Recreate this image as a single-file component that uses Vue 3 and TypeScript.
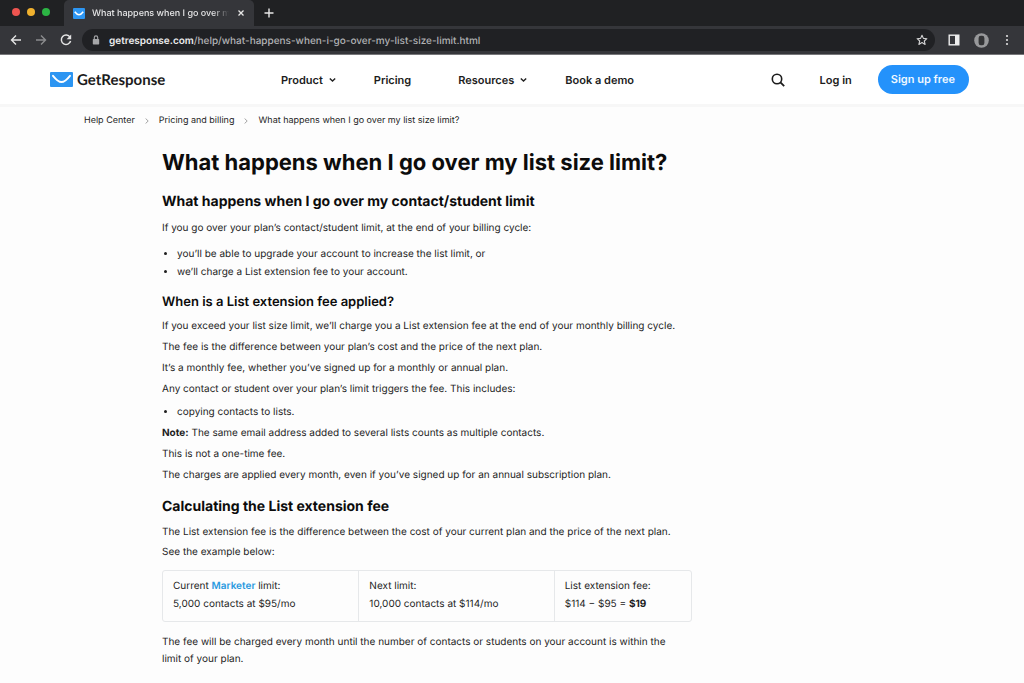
<script setup lang="ts">
import { ref } from 'vue'

interface NavItem {
  label: string
  menu: boolean
}

const address = ref('getresponse.com/help/what-happens-when-i-go-over-my-list-size-limit.html')
const navItems: NavItem[] = [
  { label: 'Product', menu: true },
  { label: 'Pricing', menu: false },
  { label: 'Resources', menu: true },
  { label: 'Book a demo', menu: false },
]
const crumbs: string[] = ['Help Center', 'Pricing and billing']
const feeRules: string[] = [
  'If you exceed your list size limit, we’ll charge you a List extension fee at the end of your monthly billing cycle.',
  'The fee is the difference between your plan’s cost and the price of the next plan.',
  'It’s a monthly fee, whether you’ve signed up for a monthly or annual plan.',
  'Any contact or student over your plan’s limit triggers the fee. This includes:',
]
</script>

<template>
  <div class="browser">
    <header class="chrome">
      <div class="tabstrip">
        <div class="lights"><i class="red"></i><i class="amber"></i><i class="green"></i></div>
        <div class="tab">
          <svg class="favicon" viewBox="0 0 12 11" aria-hidden="true">
            <rect width="12" height="11" rx="1" fill="#2d96f3" />
            <path d="M1.8 3.8Q6 9.6 10.2 3.8" fill="none" stroke="#fff" stroke-width="1.6" />
          </svg>
          <span class="tab-title">What happens when I go over my list size limit?</span>
          <button class="icon-btn tab-close" aria-label="Close tab">
            <svg width="8" height="8" viewBox="0 0 8 8"><path d="M1.5 1.5l5 5M6.5 1.5l-5 5" stroke="#e8e8e8" stroke-width="1.3" /></svg>
          </button>
        </div>
        <button class="icon-btn new-tab" aria-label="New tab">
          <svg width="10" height="10" viewBox="0 0 10 10"><path d="M5 .5v9M.5 5h9" stroke="#e8e8e8" stroke-width="1.4" /></svg>
        </button>
      </div>
      <div class="toolbar">
        <button class="icon-btn" aria-label="Back">
          <svg width="12" height="12" viewBox="0 0 12 12"><path d="M11 6H1.8M6 1.5L1.5 6L6 10.5" fill="none" stroke="#e4e4e4" stroke-width="1.4" /></svg>
        </button>
        <button class="icon-btn" aria-label="Forward">
          <svg width="12" height="12" viewBox="0 0 12 12"><path d="M1 6h9.2M6 1.5L10.5 6L6 10.5" fill="none" stroke="#8b8c8e" stroke-width="1.4" /></svg>
        </button>
        <button class="icon-btn" aria-label="Reload">
          <svg width="12" height="12" viewBox="0 0 12 12"><path d="M10 3.2A4.7 4.7 0 1 0 10.6 7" fill="none" stroke="#e4e4e4" stroke-width="1.5" /><path d="M11.2.6v4.6H6.6z" fill="#e4e4e4" /></svg>
        </button>
        <div class="address">
          <svg width="8" height="10" viewBox="0 0 8 10" aria-hidden="true"><rect x=".8" y="4" width="6.4" height="5.4" rx=".7" fill="#a5a6a8" /><path d="M2.3 4.2V2.6a1.7 1.7 0 0 1 3.4 0v1.6" fill="none" stroke="#a5a6a8" stroke-width="1.1" /></svg>
          <label class="url">
            <span class="url-text" aria-hidden="true"><b>getresponse.com</b>{{ address.slice(15) }}</span>
            <input v-model="address" class="url-input" type="text" aria-label="Address" />
          </label>
          <button class="icon-btn" aria-label="Bookmark">
            <svg width="12" height="12" viewBox="0 0 12 12"><path d="M6 1.2l1.4 3.2 3.5.3-2.6 2.3.8 3.4L6 8.6l-3.1 1.8.8-3.4L1.1 4.7l3.5-.3z" fill="none" stroke="#d2d2d3" stroke-width="1.1" stroke-linejoin="round" /></svg>
          </button>
        </div>
        <div class="tools">
          <button class="icon-btn" aria-label="Side panel">
            <svg width="12" height="12" viewBox="0 0 12 12"><rect x="1.2" y="1.2" width="9.6" height="9.6" fill="none" stroke="#eee" stroke-width="1.4" /><path d="M7 1h4v10H7z" fill="#eee" /></svg>
          </button>
          <button class="icon-btn" aria-label="Profile">
            <svg width="15" height="15" viewBox="0 0 15 15"><circle cx="7.5" cy="7.5" r="7.3" fill="#98999b" /><rect x="4.6" y="2.8" width="5.8" height="9.4" rx="2.2" fill="#333436" /></svg>
          </button>
          <button class="icon-btn" aria-label="More">
            <svg width="8" height="12" viewBox="0 0 8 12" fill="#dedede"><circle cx="4" cy="2" r="1.1" /><circle cx="4" cy="6" r="1.1" /><circle cx="4" cy="10" r="1.1" /></svg>
          </button>
        </div>
      </div>
    </header>

    <header class="site">
      <a class="logo" href="#">
        <svg width="23" height="15" viewBox="0 0 23 15" aria-hidden="true">
          <rect width="23" height="15" rx="1" fill="#2c95f2" />
          <path d="M3 3.8C6.2 7.8 8.8 10 11.5 10S16.8 7.8 20 3.8" fill="none" stroke="#fff" stroke-width="1.9" stroke-linecap="round" />
        </svg>
        <span>GetResponse</span>
      </a>
      <nav>
        <a v-for="item in navItems" :key="item.label" href="#" :class="{ plain: !item.menu }">
          {{ item.label }}
          <svg v-if="item.menu" width="7" height="6" viewBox="0 0 7 6" aria-hidden="true"><path d="M.8 1.4l2.7 2.6 2.7-2.6" fill="none" stroke="#222" stroke-width="1.4" /></svg>
        </a>
      </nav>
      <div class="account">
        <button class="icon-btn" aria-label="Search">
          <svg width="14" height="14" viewBox="0 0 14 14"><circle cx="6" cy="6" r="4.7" fill="none" stroke="#1c1c1c" stroke-width="1.6" /><path d="M9.4 9.4l3.8 3.8" stroke="#1c1c1c" stroke-width="1.8" /></svg>
        </button>
        <a href="#">Log in</a>
        <a class="signup" href="#">Sign up free</a>
      </div>
    </header>

    <div class="crumbs">
      <template v-for="crumb in crumbs" :key="crumb">
        <a href="#">{{ crumb }}</a>
        <svg width="4" height="6" viewBox="0 0 4 6" aria-hidden="true"><path d="M.6.5L3.2 3 .6 5.5" fill="none" stroke="#999" stroke-width=".9" /></svg>
      </template>
      <span>What happens when I go over my list size limit?</span>
    </div>

    <main>
      <h1>What happens when I go over my list size limit?</h1>

      <section class="first">
        <h2>What happens when I go over my contact/student limit</h2>
        <p>If you go over your plan’s contact/student limit, at the end of your billing cycle:</p>
        <ul>
          <li>you’ll be able to upgrade your account to increase the list limit, or</li>
          <li>we’ll charge a List extension fee to your account.</li>
        </ul>
      </section>

      <section class="rules">
        <h3>When is a List extension fee applied?</h3>
        <p v-for="rule in feeRules" :key="rule">{{ rule }}</p>
        <ul><li>copying contacts to lists.</li></ul>
        <p><b>Note:</b> The same email address added to several lists counts as multiple contacts.</p>
        <p>This is not a one-time fee.</p>
        <p>The charges are applied every month, even if you’ve signed up for an annual subscription plan.</p>
      </section>

      <section class="calc">
        <h2>Calculating the List extension fee</h2>
        <p>The List extension fee is the difference between the cost of your current plan and the price of the next plan.</p>
        <p>See the example below:</p>
        <table>
          <tbody>
            <tr>
              <td>Current <a href="#">Marketer</a> limit:<br />5,000 contacts at $95/mo</td>
              <td>Next limit:<br />10,000 contacts at $114/mo</td>
              <td>List extension fee:<br />$114 − $95 = <b>$19</b></td>
            </tr>
          </tbody>
        </table>
        <p class="closing">The fee will be charged every month until the number of contacts or students on your account is within the limit of your plan.</p>
      </section>
    </main>
  </div>
</template>

<style>
body {
  background: #fdfdfd;
}
</style>

<style scoped>
* {
  box-sizing: border-box;
}
.browser {
  font-family: Inter, "Liberation Sans", sans-serif;
  font-size: 10px;
  line-height: 18px;
  color: #1e1e1e;
  text-rendering: geometricPrecision;
}
a {
  color: inherit;
  text-decoration: none;
}
svg {
  display: block;
  flex: none;
}
.icon-btn {
  display: flex;
  flex: none;
  padding: 0;
  border: 0;
  background: none;
}
.chrome {
  background: #35363a;
  border-bottom: 1px solid #77777a;
}
.tabstrip {
  display: flex;
  align-items: center;
  height: 26px;
  padding-left: 12px;
  background: #202123;
}
.lights {
  display: flex;
  gap: 7px;
  width: 52px;
  padding-bottom: 3px;
}
.lights i {
  width: 8px;
  height: 8px;
  border-radius: 50%;
}
.red { background: #ee5550; }
.amber { background: #f0b12e; }
.green { background: #2cb544; }
.tab {
  display: flex;
  align-items: center;
  width: 190px;
  height: 26px;
  padding: 0 9px;
  border-radius: 5px 5px 0 0;
  background: #35363a;
}
.favicon {
  width: 12px;
  height: 11px;
}
.tab-title {
  flex: 1;
  margin: 0 8px 0 7px;
  padding-top: 2px;
  overflow: hidden;
  white-space: nowrap;
  font-size: 9px;
  font-weight: 500;
  color: #e6e6e7;
  mask-image: linear-gradient(to right, #000 88%, transparent);
}
.new-tab {
  margin-left: 10px;
}
.toolbar {
  display: flex;
  align-items: center;
  gap: 13px;
  height: 28px;
  padding: 0 13px 0 10px;
}
.address {
  display: flex;
  flex: 1;
  align-items: center;
  height: 22px;
  margin-left: -3px;
  padding: 0 7px 0 10px;
  border-radius: 11px;
  background: #202124;
}
.url {
  display: grid;
  flex: 1;
  margin-left: 9px;
  padding-top: 2px;
}
.url-text,
.url-input {
  grid-area: 1 / 1;
  font: 500 10px/18px Inter, "Liberation Sans", sans-serif;
}
.url-text {
  color: #b1b2b4;
}
.url-text b {
  font-weight: 600;
  color: #ececed;
}
.url-input {
  width: 100%;
  padding: 0;
  border: 0;
  outline: 0;
  background: none;
  color: transparent;
}
.tools {
  display: flex;
  align-items: center;
  gap: 14px;
}
.site {
  display: flex;
  align-items: center;
  height: 52px;
  padding: 0 55px 0 50px;
  border-bottom: 3px solid #f7f7f7;
  background: #fff;
  font-size: 11px;
  font-weight: 600;
  color: #1c1c1c;
}
.logo {
  display: flex;
  align-items: center;
  gap: 4px;
  width: 231px;
  font-family: Lato, sans-serif;
  font-size: 15px;
  font-weight: 700;
}
nav {
  display: flex;
  flex: 1;
  gap: 38px;
}
nav a {
  display: flex;
  align-items: center;
  gap: 6px;
}
nav .plain {
  padding-right: 9px;
}
.account {
  display: flex;
  align-items: center;
  gap: 35px;
}
.signup {
  margin-left: -9px;
  padding: 0 14px 0 13px;
  border-radius: 15px;
  background: #2492fb;
  line-height: 29px;
  color: #eff8ff;
}
.crumbs {
  display: flex;
  align-items: center;
  gap: 10px;
  padding: 5px 84px 0;
  font-size: 9px;
}
main {
  width: 52%;
  max-width: 530px;
  margin: 18px 0 0 162px;
}
h1,
h2,
h3,
p,
ul {
  margin: 0;
}
h1,
h2,
h3 {
  font-weight: 700;
  line-height: 20px;
  color: #0c0c0c;
}
h1 {
  font-size: 22px;
  line-height: 30px;
}
h2 {
  margin-top: 14px;
  font-size: 14px;
}
h3 {
  margin-top: 11px;
  font-size: 13px;
  font-weight: 600;
}
h2 + p,
h3 + p {
  margin-top: 5px;
}
ul {
  padding-left: 15px;
}
p + ul {
  margin-top: 5px;
}
p + p,
ul + p {
  margin-top: 3px;
}
.first h2 + p {
  margin-top: 7px;
}
.first p + ul {
  margin-top: 8px;
}
.calc h2 {
  margin-top: 13px;
}
.calc h2 + p {
  margin-top: 6px;
}
.calc p + p {
  margin-top: 2px;
}
td a {
  font-weight: 600;
  color: #2a9ae0;
}
table {
  width: 100%;
  margin-top: 9px;
  table-layout: fixed;
  border: 1px solid #e6e8ea;
  border-radius: 3px;
  border-spacing: 0;
}
td {
  width: 37%;
  padding: 6px 10px 8px;
  vertical-align: top;
}
td:last-child {
  width: 26%;
}
td + td {
  border-left: 1px solid #e6e8ea;
}
.calc .closing {
  margin-top: 12px;
  padding-right: 10px;
  line-height: 17px;
}
</style>
